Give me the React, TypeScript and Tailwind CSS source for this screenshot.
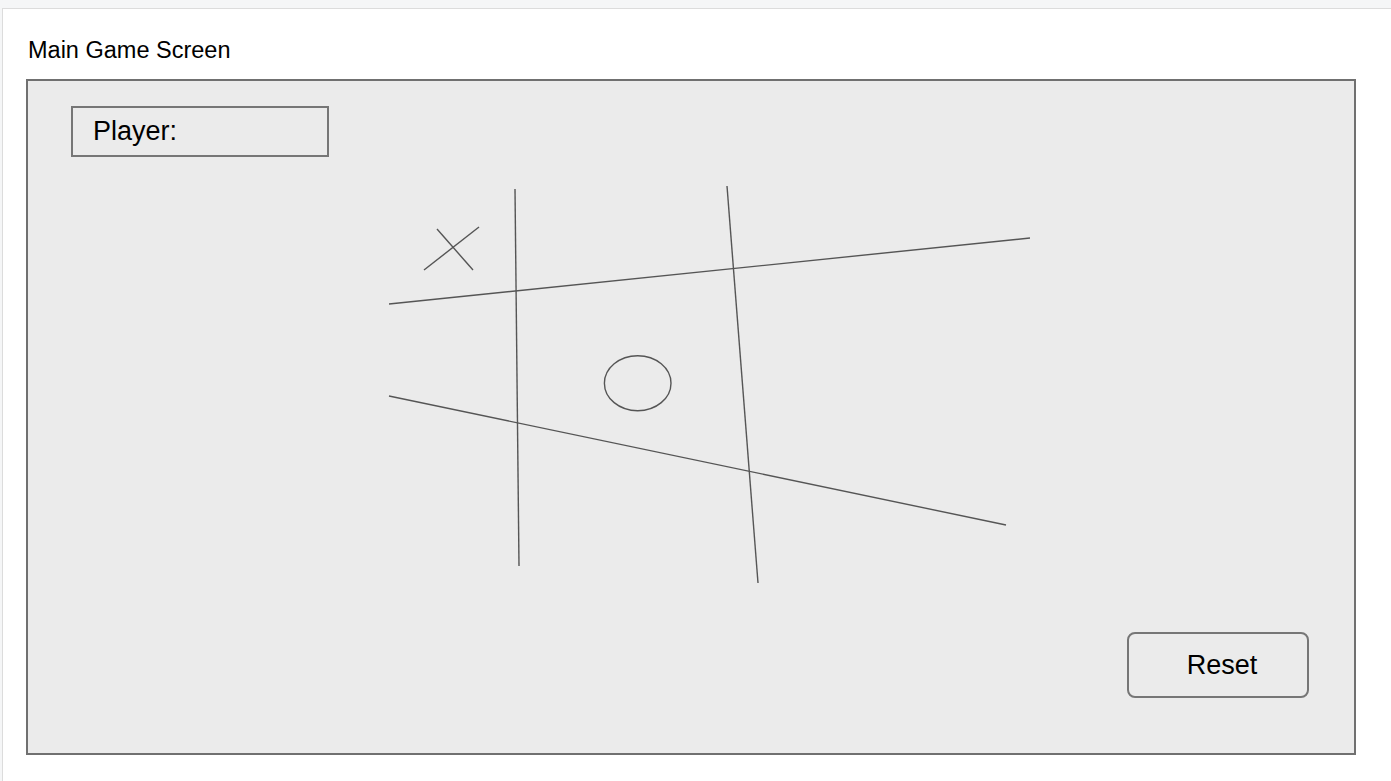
export default function App() {
  return (
    <div
      className="w-[1391px] h-[781px] bg-[#f5f6f7] pt-2 overflow-hidden"
      style={{ fontFamily: '"Liberation Sans", Arial, sans-serif' }}
    >
      <div className="ml-[2px] h-full bg-white border-t border-l border-[#dcdcdc] pt-[28px] pl-[23px]">
        <h1 className="ml-[2px] text-[23.5px] leading-[26px] text-black">Main Game Screen</h1>
        <div className="relative mt-[16px] w-[1330px] h-[676px] bg-[#ebebeb] border-2 border-[#707070] flex flex-col pl-[43px] pt-[25px] pr-[45px] pb-[55px]">
          <svg
            className="absolute left-[-2px] top-[-2px]"
            width="1330"
            height="676"
            viewBox="26 79 1330 676"
            fill="none"
            stroke="#555"
            strokeWidth="1.4"
          >
            <line x1="515" y1="189" x2="519" y2="566" />
            <line x1="727" y1="186" x2="758" y2="583" />
            <line x1="389" y1="304" x2="1030" y2="238" />
            <line x1="389" y1="396" x2="1006" y2="525" />
            <line x1="424" y1="270" x2="479" y2="227" />
            <line x1="437" y1="229" x2="473" y2="270" />
            <ellipse cx="637.7" cy="383.2" rx="33.3" ry="27.5" />
          </svg>
          <div className="relative w-[258px] h-[51px] border-2 border-[#767676] pl-5 flex items-center text-[27px] text-black">
            Player:
          </div>
          <button
            type="button"
            className="relative mt-auto self-end w-[182px] h-[66px] rounded-lg border-2 border-[#767676] text-[27px] text-black pl-2"
          >
            Reset
          </button>
        </div>
      </div>
    </div>
  );
}
